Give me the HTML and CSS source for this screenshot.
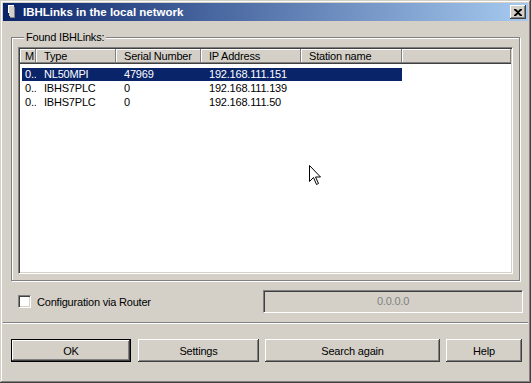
FILE: index.html
```html
<!DOCTYPE html>
<html lang="en">
<head>
    <meta charset="UTF-8">
    <title>IBHLinks in the local network</title>
    <link rel="stylesheet" href="styles.css">
</head>
<body>
    <div class="window">
        <!-- title bar -->
        <div class="titlebar">
            <svg class="appicon" width="16" height="16" viewBox="0 0 16 16">
                <path d="M3 1h6v2h1v11H5v-2H4V9H3z" fill="#d4d0c8"/>
                <path d="M3 1h6v1H4v7H3z" fill="#fff"/>
                <path d="M9 3h1v11H5v-1h4z" fill="#808080"/>
            </svg>
            <span class="title">IBHLinks in the local network</span>
            <div class="close">
                <svg width="8" height="7" viewBox="0 0 8 7">
                    <path d="M0 0h2l2 2 2-2h2v1L5 3.5 8 6v1H6L4 5 2 7H0V6l3-2.5L0 1z" fill="#000"/>
                </svg>
            </div>
        </div>

        <!-- found devices -->
        <fieldset class="group">
            <legend>Found IBHLinks:</legend>
            <div class="list">
                <div class="head">
                    <div class="hc">M</div>
                    <div class="hc">Type</div>
                    <div class="hc">Serial Number</div>
                    <div class="hc">IP Address</div>
                    <div class="hc">Station name</div>
                    <div class="hc"></div>
                </div>
                <div class="rows">
                    <div class="row sel">
                        <div class="c">0..</div>
                        <div class="c">NL50MPI</div>
                        <div class="c">47969</div>
                        <div class="c">192.168.111.151</div>
                        <div class="c"></div>
                    </div>
                    <div class="row">
                        <div class="c">0..</div>
                        <div class="c">IBHS7PLC</div>
                        <div class="c">0</div>
                        <div class="c">192.168.111.139</div>
                        <div class="c"></div>
                    </div>
                    <div class="row">
                        <div class="c">0..</div>
                        <div class="c">IBHS7PLC</div>
                        <div class="c">0</div>
                        <div class="c">192.168.111.50</div>
                        <div class="c"></div>
                    </div>
                </div>
            </div>
        </fieldset>

        <!-- router option -->
        <div class="options">
            <span class="check"></span>
            <span class="check-label">Configuration via Router</span>
            <div class="field">0.0.0.0</div>
        </div>

        <div class="sep"></div>

        <div class="buttons">
            <button class="btn default ok">OK</button>
            <button class="btn settings">Settings</button>
            <button class="btn search">Search again</button>
            <button class="btn help">Help</button>
        </div>

        <!-- mouse pointer -->
        <svg class="cursor" width="13" height="21" viewBox="0 0 13 21">
            <path d="M0.5 0.5v16l4-4 3 7 2-1-3-6.5h5z" fill="#fff" stroke="#000" stroke-width="1"/>
        </svg>
    </div>
</body>
</html>
```

FILE: styles.css
```css
*{
    margin: 0;
    padding: 0;
    box-sizing: border-box;
}
body{
    background: #d4d0c8;
    font-family: "Liberation Sans", Arial, sans-serif;
    font-size: 11px;
    letter-spacing: -0.2px;
    color: #000;
}
.window{
    position: relative;
    width: 531px;
    height: 383px;
    padding: 3px;
    background: #d4d0c8;
    box-shadow: inset -1px -1px #404040, inset 1px 1px #d4d0c8,
                inset -2px -2px #808080, inset 2px 2px #fff;
    display: flex;
    flex-direction: column;
}
.titlebar{
    height: 18px;
    display: flex;
    align-items: center;
    padding: 0 2px;
    background: linear-gradient(to right, #0a246a, #a6caf0);
}
.appicon{
    display: block;
}
.title{
    margin-left: 2px;
    color: #fff;
    font-weight: bold;
    font-size: 11.5px;
    letter-spacing: 0;
    white-space: nowrap;
}
.close{
    margin-left: auto;
    width: 16px;
    height: 14px;
    display: flex;
    align-items: center;
    justify-content: center;
    background: #d4d0c8;
    box-shadow: inset -1px -1px #404040, inset 1px 1px #fff,
                inset -2px -2px #808080;
}
.close svg{
    display: block;
}

/* group box */
.group{
    margin: 10px 8px 0;
    padding: 3px 6px 6px;
    border: 1px solid #808080;
    box-shadow: 1px 1px 0 #fff, inset 1px 1px 0 #fff;
}
.group legend{
    margin-left: 6px;
    padding: 0 2px;
    line-height: 13px;
    background: #d4d0c8;
}
.list{
    height: 227px;
    background: #fff;
    border: 1px solid;
    border-color: #808080 #fff #fff #808080;
    box-shadow: inset 1px 1px #404040, inset -1px -1px #d4d0c8;
    padding: 1px;
}
.head, .row{
    display: grid;
    grid-template-columns: 16px 80px 85px 100px 101px 1fr;
}
.head{
    height: 15px;
}
.hc{
    height: 15px;
    line-height: 14px;
    padding-left: 8px;
    background: #d4d0c8;
    box-shadow: inset -1px -1px #808080, inset 1px 1px #fff;
    border-bottom: 1px solid #404040;
    white-space: nowrap;
    overflow: hidden;
}
.hc:first-child{
    padding-left: 5px;
}
.rows{
    padding-top: 3px;
}
.row{
    height: 14px;
    grid-template-columns: 16px 80px 85px 100px 101px;
}
.c{
    padding-left: 8px;
    padding-top: 1px;
    line-height: 13px;
    white-space: nowrap;
    overflow: hidden;
}
.c:first-child{
    padding-left: 5px;
}
.sel .c{
    color: #fff;
    background: linear-gradient(#0a246a, #0a246a) no-repeat 0 1px / 100% 13px;
}
.sel .c:first-child{
    background-position: 2px 1px;
}

/* options line */
.options{
    margin-top: 9px;
    height: 23px;
    display: flex;
    align-items: center;
    padding-left: 15px;
    padding-right: 5px;
}
.check{
    width: 13px;
    height: 13px;
    background: #fff;
    border: 1px solid;
    border-color: #808080 #fff #fff #808080;
    box-shadow: inset 1px 1px #404040, inset -1px -1px #d4d0c8;
}
.check-label{
    margin-left: 6px;
}
.field{
    margin-left: auto;
    width: 260px;
    height: 23px;
    line-height: 21px;
    text-align: center;
    color: #808080;
    border: 1px solid;
    border-color: #808080 #fff #fff #808080;
    box-shadow: inset 1px 1px #404040, inset -1px -1px #d4d0c8;
}
.sep{
    margin-top: 9px;
    height: 2px;
    border-top: 1px solid #808080;
    border-bottom: 1px solid #fff;
}

/* buttons */
.buttons{
    margin-top: 15px;
    display: flex;
    padding-left: 8px;
}
.btn{
    height: 23px;
    font: inherit;
    letter-spacing: inherit;
    color: #000;
    background: #d4d0c8;
    border: none;
    box-shadow: inset -1px -1px #404040, inset 1px 1px #fff,
                inset -2px -2px #808080;
}
.btn.default{
    border: 1px solid #000;
}
.ok{ width: 120px; }
.settings{ width: 121px; margin-left: 7px; }
.search{ width: 175px; margin-left: 6px; }
.help{ width: 76px; margin-left: 6px; }

.cursor{
    position: absolute;
    left: 309px;
    top: 165px;
}
```
